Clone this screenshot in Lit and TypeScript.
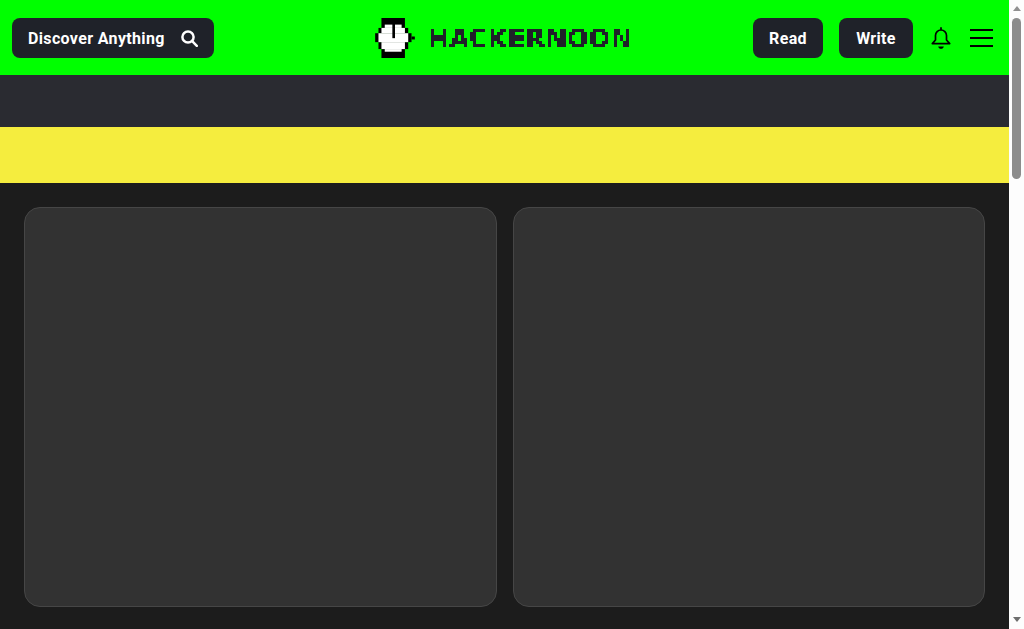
import { LitElement, html, css, svg } from "lit";
import { customElement } from "lit/decorators.js";

type R = [number, number, number, number];
const rects = (list: R[], fill: string) =>
  list.map(([x, y, w, h]) => svg`<rect x=${x} y=${y} width=${w} height=${h} fill=${fill}></rect>`);

const BLACK: R[] = [
  [52, 39, 71, 30], [43, 69, 90, 16], [33, 85, 110, 27], [143, 95, 10, 9],
  [43, 112, 90, 21], [52, 133, 71, 27],
];
const WHITE: R[] = [
  [62, 59, 51, 10], [52, 69, 71, 16], [43, 85, 90, 27], [52, 112, 71, 21],
  [62, 133, 51, 8],
];
const HAND: R[] = [[85, 50, 8, 50]];

@customElement("app-root")
export class AppRoot extends LitElement {
  static styles = css`
    :host { display: flex; height: 629px; overflow: hidden; background: #1c1c1c; font-family: "Roboto", "Liberation Sans", sans-serif; }
    .main { flex: 1; min-width: 0; }
    .nav { height: 75px; background: #00ff00; display: grid; grid-template-columns: 1fr auto 1fr; align-items: center; padding: 0 16px 0 12px; box-sizing: border-box; }
    .left { display: flex; }
    .right { display: flex; justify-content: flex-end; align-items: center; gap: 16px; }
    .btn { height: 40px; box-sizing: border-box; background: #1f2229; color: #fff; border-radius: 8px; display: flex; align-items: center; font-weight: 700; font-size: 16px; letter-spacing: 0.35px; white-space: nowrap; padding-top: 1px; }
    .search { width: 202px; padding: 1px 16px 0; justify-content: space-between; }
    .read { width: 70px; justify-content: center; }
    .write { width: 74px; justify-content: center; }
    .logo { display: flex; align-items: center; gap: 13px; margin-left: 2px; padding-top: 1px; }
    .wordmark { overflow: visible; }
    .word-text { font-family: "DejaVu Sans", sans-serif; font-weight: 700; font-size: 26px; fill: #1f2229; }
    .icons { display: flex; align-items: center; margin-left: 2px; gap: 19px; }
    .band { height: 52px; background: #2a2b31; }
    .yellow { height: 56px; background: #f5ed3e; }
    .cards { display: grid; grid-template-columns: 1fr 1fr; gap: 16px; padding: 24px; }
    .card { height: 400px; box-sizing: border-box; background: #323232; border: 1px solid #464646; border-radius: 16px; }
    svg { display: block; flex: none; }
    .sb { width: 15px; flex: none; background: #fdfdfd; display: flex; flex-direction: column; align-items: center; }
    .up { margin-top: 6px; border-left: 4.5px solid transparent; border-right: 4.5px solid transparent; border-bottom: 5px solid #909090; }
    .thumb { margin-top: 7px; width: 9px; height: 161px; background: #8c8c8c; border-radius: 5px; }
    .down { margin-top: auto; margin-bottom: 7px; border-left: 4.5px solid transparent; border-right: 4.5px solid transparent; border-top: 5px solid #6e6e6e; }
  `;

  render() {
    return html`
      <div class="main">
        <div class="nav">
          <div class="left">
            <div class="btn search">
              <span>Discover Anything</span>
              <svg width="17" height="17" viewBox="0 0 17 17" fill="none" stroke="#fff" stroke-width="2.5">
                <circle cx="7" cy="7" r="5.6"></circle>
                <path d="M11.2 11.2 L15.8 15.8" stroke-linecap="round"></path>
              </svg>
            </div>
          </div>
          <div class="logo">
            <svg width="40" height="40" viewBox="33 39 120 121">
              ${rects(BLACK, "#000")}
              ${rects(WHITE, "#fff")}
              ${rects(HAND, "#000")}
            </svg>
            <svg class="wordmark" width="204" height="24" viewBox="0 0 204 24">
              <defs>
                <filter id="blocky" filterUnits="userSpaceOnUse" x="-2" y="-2" width="210" height="28" color-interpolation-filters="sRGB">
                  <feComponentTransfer in="SourceGraphic" result="solid">
                    <feFuncR type="discrete" tableValues="0.1216"></feFuncR>
                    <feFuncG type="discrete" tableValues="0.1333"></feFuncG>
                    <feFuncB type="discrete" tableValues="0.1608"></feFuncB>
                    <feFuncA type="discrete" tableValues="0 1"></feFuncA>
                  </feComponentTransfer>
                  <feFlood x="1" y="1" width="1" height="1"></feFlood>
                  <feComposite width="3" height="3"></feComposite>
                  <feTile result="grid"></feTile>
                  <feComposite in="solid" in2="grid" operator="in"></feComposite>
                  <feMorphology operator="dilate" radius="1"></feMorphology>
                </filter>
              </defs>
              <text class="word-text" x="0" y="22" textLength="204" lengthAdjust="spacingAndGlyphs" filter="url(#blocky)">HACKERNOON</text>
            </svg>
          </div>
          <div class="right">
            <div class="btn read">Read</div>
            <div class="btn write">Write</div>
            <div class="icons">
              <svg width="20" height="22" viewBox="0 0 20 22" fill="none" stroke="#000" stroke-width="1.7">
                <path d="M10 0.3V3M4.5 13V8.5a5.5 5.5 0 0 1 11 0V13l3.2 3.6H1.3L4.5 13z" stroke-linejoin="round"></path>
                <path d="M7.2 19.4h5.6c-.3 1.6-1.4 2.3-2.8 2.3s-2.5-.7-2.8-2.3z" fill="#000" stroke="none"></path>
              </svg>
              <svg width="23" height="18" viewBox="0 0 23 18" stroke="#000" stroke-width="2">
                <path d="M0 1H23M0 9H23M0 17H23"></path>
              </svg>
            </div>
          </div>
        </div>
        <div class="band"></div>
        <div class="yellow"></div>
        <div class="cards">
          <div class="card"></div>
          <div class="card"></div>
        </div>
      </div>
      <div class="sb">
        <div class="up"></div>
        <div class="thumb"></div>
        <div class="down"></div>
      </div>
    `;
  }
}
